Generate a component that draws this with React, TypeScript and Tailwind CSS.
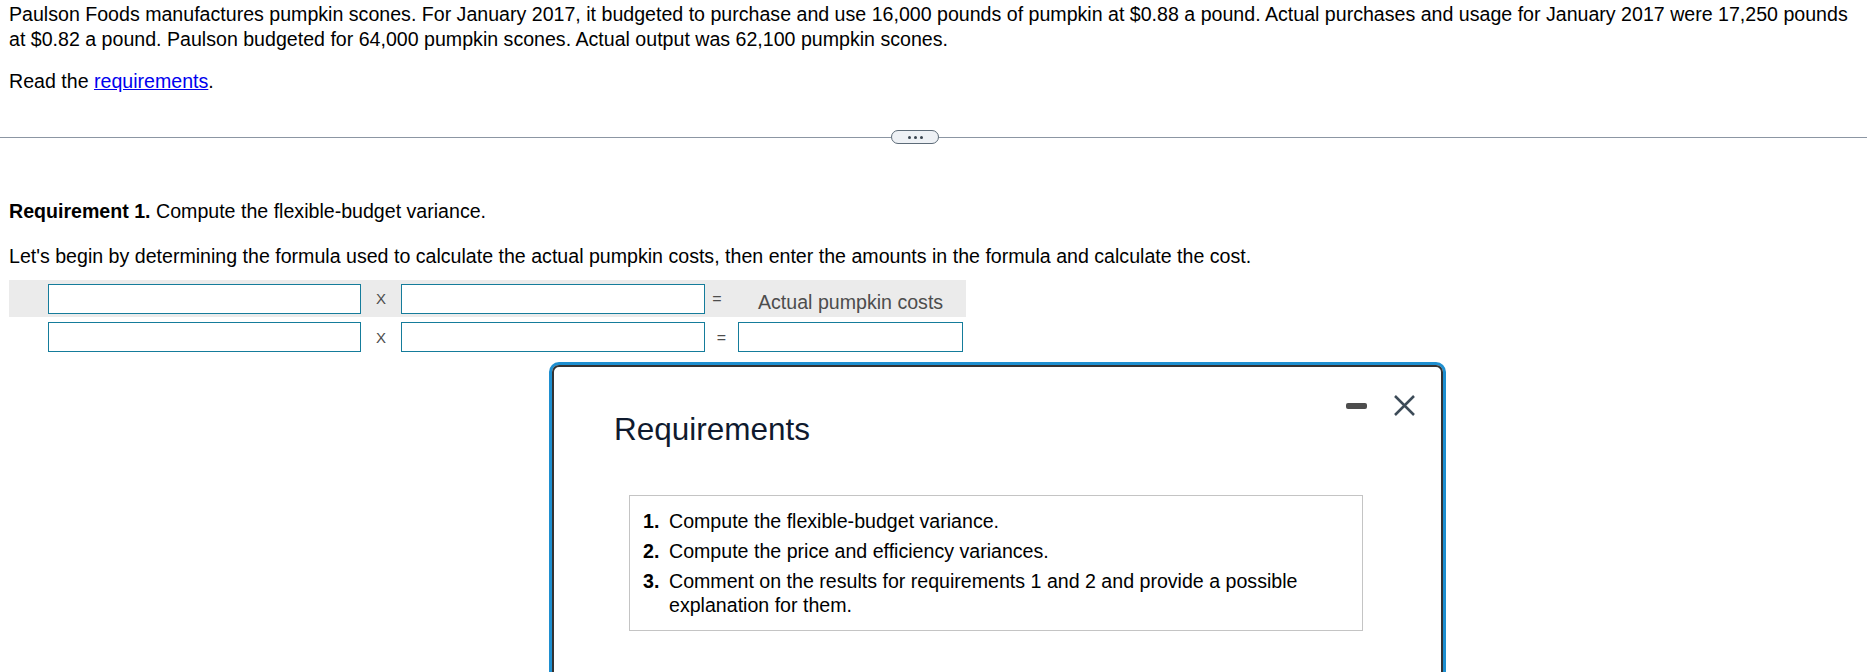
import React from "react";

const inputBox = "h-[30px] border border-[#157c9b] bg-white";

const App = () => {
	return (
		<div className="relative w-full h-[672px] overflow-hidden bg-white text-black font-['Liberation_Sans',Arial,sans-serif] text-[19.6px] leading-[25px]">
			<div className="px-[9px] pt-[2px]">
				<p>
					Paulson Foods manufactures pumpkin scones. For January 2017, it budgeted to purchase and use 16,000 pounds of pumpkin at $0.88 a pound. Actual purchases and usage for January 2017 were 17,250 pounds at $0.82 a pound. Paulson budgeted for 64,000 pumpkin scones. Actual output was 62,100 pumpkin scones.
				</p>
				<p className="mt-[17px]">
					Read the{" "}
					<a href="#" className="text-[#0000ee] underline">
						requirements
					</a>
					.
				</p>
			</div>

			{/* Divider with expand button */}
			<div className="mt-[36px] flex items-center h-[14px]">
				<div className="w-[891px] h-px bg-[#8c96a3]" />
				<button className="w-[48px] h-[14px] rounded-full border border-[#5d6b78] bg-[#eef1f5] flex items-center justify-center gap-[3px]">
					<span className="w-[3px] h-[3px] rounded-full bg-[#3a4550]" />
					<span className="w-[3px] h-[3px] rounded-full bg-[#3a4550]" />
					<span className="w-[3px] h-[3px] rounded-full bg-[#3a4550]" />
				</button>
				<div className="flex-1 h-px bg-[#8c96a3]" />
			</div>

			<div className="px-[9px]">
				<p className="mt-[55px]">
					<span className="font-bold">Requirement 1.</span> Compute the flexible-budget variance.
				</p>
				<p className="mt-[20px]">
					Let's begin by determining the formula used to calculate the actual pumpkin costs, then enter the amounts in the formula and calculate the cost.
				</p>

				{/* Formula row 1 */}
				<div className="mt-[11px] w-[957px] h-[37px] bg-[#ebebeb] flex items-center pl-[39px]">
					<div className={`w-[313px] ${inputBox}`} />
					<span className="w-[40px] text-center text-[15px] text-[#4d4d4d]">X</span>
					<div className={`w-[304px] ${inputBox}`} />
					<span className="w-[24px] text-center text-[16px] text-[#4d4d4d]">=</span>
					<span className="ml-[29px] mt-[7px] text-[#4d4d4d]">Actual pumpkin costs</span>
				</div>

				{/* Formula row 2 */}
				<div className="mt-[5px] w-[957px] flex items-center pl-[39px]">
					<div className={`w-[313px] ${inputBox}`} />
					<span className="w-[40px] text-center text-[15px] text-[#4d4d4d]">X</span>
					<div className={`w-[304px] ${inputBox}`} />
					<span className="w-[33px] text-center text-[16px] text-[#4d4d4d]">=</span>
					<div className={`w-[225px] ${inputBox}`} />
				</div>
			</div>

			{/* Requirements dialog */}
			<div className="absolute left-[549px] top-[362px] w-[897px] h-[340px] rounded-[10px] border-[3px] border-[#1e8fd0] bg-white">
				<div className="h-full rounded-[7px] border-2 border-[#333] bg-white">
					<div className="flex items-start justify-between pt-[28px] pl-[60px] pr-[26px]">
						<h2 className="mt-[16px] text-[31.5px] leading-[36px] text-[#0f1a2e]">Requirements</h2>
						<div className="flex items-center gap-[27px]">
							<span className="mt-[1px] w-[21px] h-[6px] rounded-[2px] bg-[#4d4d4d]" />
							<svg width="21" height="21" viewBox="0 0 21 21">
								<path d="M1 1 L20 20 M20 1 L1 20" stroke="#3d4b58" strokeWidth="2.5" fill="none" />
							</svg>
						</div>
					</div>

					<div className="mt-[48px] ml-[75px] w-[734px] border border-[#c4c4c4] pt-[13px] pb-[13px] pl-[13px] pr-[13px] leading-[24px]">
						<ol className="flex flex-col gap-[6px]">
							<li className="flex">
								<span className="w-[26px] font-bold shrink-0">1.</span>
								<span>Compute the flexible-budget variance.</span>
							</li>
							<li className="flex">
								<span className="w-[26px] font-bold shrink-0">2.</span>
								<span>Compute the price and efficiency variances.</span>
							</li>
							<li className="flex">
								<span className="w-[26px] font-bold shrink-0">3.</span>
								<span>Comment on the results for requirements 1 and 2 and provide a possible explanation for them.</span>
							</li>
						</ol>
					</div>
				</div>
			</div>
		</div>
	);
};

export default App;
